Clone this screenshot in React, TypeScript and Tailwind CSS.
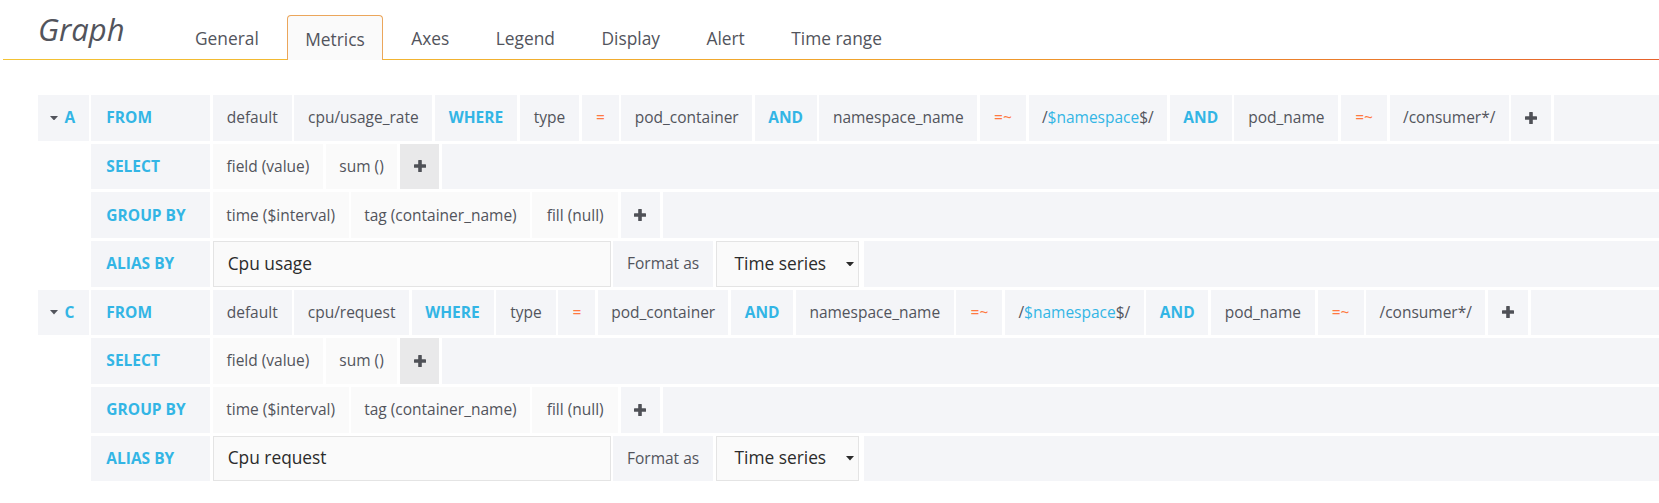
import React from "react";

type Item =
  | { k: "v"; t: string; w: string }
  | { k: "part"; t: string; w: string }
  | { k: "kw"; t: string; w: string }
  | { k: "op"; t: string; w: string }
  | { k: "var"; pre: string; v: string; post: string; w: string }
  | { k: "plus"; dark?: boolean; w: string };

function Plus() {
  return (
    <svg width="12" height="12" viewBox="0 0 12 12" className="block">
      <rect x="0" y="4.2" width="12" height="3.6" rx="0.6" fill="#4f5157" />
      <rect x="4.2" y="0" width="3.6" height="12" rx="0.6" fill="#4f5157" />
    </svg>
  );
}

function Caret({ color }: { color: string }) {
  return (
    <svg width="8" height="4.5" viewBox="0 0 8 4.5" className="block">
      <polygon points="0,0 8,0 4,4.5" fill={color} />
    </svg>
  );
}

function Cell({ item }: { item: Item }) {
  const base = "flex items-center justify-center shrink-0 whitespace-nowrap " + item.w;
  if (item.k === "plus") {
    return (
      <div className={base + (item.dark ? " bg-[#e9e9ea]" : " bg-[#f4f5f8]")}>
        <Plus />
      </div>
    );
  }
  if (item.k === "kw") {
    return <div className={base + " bg-[#f4f5f8] font-bold text-[#33b5e5]"}>{item.t}</div>;
  }
  if (item.k === "op") {
    return <div className={base + " bg-[#f4f5f8] text-[#ff7941]"}>{item.t}</div>;
  }
  if (item.k === "var") {
    return (
      <div className={base + " bg-[#f4f5f8] text-[#52545c]"}>
        {item.pre}
        <span className="text-[#33b5e5]">{item.v}</span>
        {item.post}
      </div>
    );
  }
  if (item.k === "part") {
    return <div className={base + " bg-[#fafafa] text-[#52545c]"}>{item.t}</div>;
  }
  return <div className={base + " bg-[#f4f5f8] text-[#52545c]"}>{item.t}</div>;
}

function Label({ text }: { text: string }) {
  return (
    <div className="flex items-center w-[118.7px] shrink-0 pl-[15px] bg-[#f4f5f8] font-bold text-[#33b5e5]">
      {text}
    </div>
  );
}

function Row({ label, items }: { label: string; items: Item[] }) {
  return (
    <div className="flex gap-[2.67px] h-[45.67px]">
      <Label text={label} />
      {items.map((it, i) => (
        <Cell key={i} item={it} />
      ))}
      <div className="flex-1 bg-[#f4f5f8]" />
    </div>
  );
}

function AliasRow({ alias }: { alias: string }) {
  return (
    <div className="flex gap-[2.67px] h-[45.67px]">
      <Label text="ALIAS BY" />
      <div className="flex items-center w-[398px] shrink-0 pl-[14px] bg-[#fafafa] border border-[#e4e4e4] text-[17.33px] text-[#2b2b2b]">
        {alias}
      </div>
      <div className="flex items-center justify-center w-[99.5px] shrink-0 bg-[#f4f5f8] text-[#52545c]">
        Format as
      </div>
      <div className="flex items-center justify-between w-[143.5px] shrink-0 mr-[2.67px] pl-[18px] pr-[4px] bg-[#fafafa] border border-[#e4e4e4] text-[17.33px] text-[#2b2b2b]">
        <span>Time series</span>
        <Caret color="#2b2b2b" />
      </div>
      <div className="flex-1 bg-[#f4f5f8]" />
    </div>
  );
}

function Query({
  letter,
  metric,
  metricW,
  alias,
}: {
  letter: string;
  metric: string;
  metricW: string;
  alias: string;
}) {
  const from: Item[] = [
    { k: "v", t: "default", w: "w-[79px]" },
    { k: "v", t: metric, w: metricW },
    { k: "kw", t: "WHERE", w: "w-[82px]" },
    { k: "v", t: "type", w: "w-[59.5px]" },
    { k: "op", t: "=", w: "w-[37px]" },
    { k: "v", t: "pod_container", w: "w-[130.5px]" },
    { k: "kw", t: "AND", w: "w-[62px]" },
    { k: "v", t: "namespace_name", w: "w-[158px]" },
    { k: "op", t: "=~", w: "w-[46px]" },
    { k: "var", pre: "/", v: "$namespace", post: "$/", w: "w-[138.5px]" },
    { k: "kw", t: "AND", w: "w-[62px]" },
    { k: "v", t: "pod_name", w: "w-[104px]" },
    { k: "op", t: "=~", w: "w-[46px]" },
    { k: "v", t: "/consumer*/", w: "w-[119px]" },
    { k: "plus", w: "w-[40px]" },
  ];
  const select: Item[] = [
    { k: "part", t: "field (value)", w: "w-[110.5px]" },
    { k: "part", t: "sum ()", w: "w-[71.4px]" },
    { k: "plus", dark: true, w: "w-[39.4px]" },
  ];
  const group: Item[] = [
    { k: "part", t: "time ($interval)", w: "w-[136px]" },
    { k: "part", t: "tag (container_name)", w: "w-[178.2px]" },
    { k: "part", t: "fill (null)", w: "w-[86px]" },
    { k: "plus", w: "w-[39.2px]" },
  ];
  return (
    <div className="flex items-start gap-[2.67px]">
      <div className="flex items-center gap-[6.5px] w-[50.7px] h-[45.67px] shrink-0 pl-[12px] bg-[#f4f5f8]">
        <Caret color="#52545c" />
        <span className="font-bold text-[#33b5e5]">{letter}</span>
      </div>
      <div className="flex flex-col gap-[3px] flex-1">
        <Row label="FROM" items={from} />
        <Row label="SELECT" items={select} />
        <Row label="GROUP BY" items={group} />
        <AliasRow alias={alias} />
      </div>
    </div>
  );
}

const tabs = ["General", "Metrics", "Axes", "Legend", "Display", "Alert", "Time range"];

export default function App() {
  return (
    <div
      className="w-[1659px] h-[503px] overflow-hidden bg-white text-[15.5px]"
      style={{ fontFamily: '"Open Sans", "Liberation Sans", sans-serif' }}
    >
      <div className="relative h-[60px] flex items-start">
        <div className="absolute left-[3px] right-0 bottom-0 h-[1px] bg-[linear-gradient(to_right,#f3c334,#f0a12c_55%,#e6612c)]" />
        <div className="w-[176.5px] shrink-0 pl-[38px] pt-[8px] text-[31px] italic leading-[42px] text-[#52545c]">
          Graph
        </div>
        <div className="flex gap-[9.5px] pt-[15px]">
          {tabs.map((t) =>
            t === "Metrics" ? (
              <div
                key={t}
                className="relative z-10 h-[45px] px-[17.5px] pt-[11.3px] leading-[24px] text-[17.33px] text-[#52545c] bg-[#fafafa] border border-b-0 border-[#eba65b] rounded-t-[4px]"
              >
                {t}
              </div>
            ) : (
              <div
                key={t}
                className="h-[45px] px-[18.5px] pt-[10.6px] leading-[24px] text-[17.33px] text-[#52545c]"
              >
                {t}
              </div>
            )
          )}
        </div>
      </div>
      <div className="flex flex-col gap-[3px] pt-[35px] pl-[38px]">
        <Query letter="A" metric="cpu/usage_rate" metricW="w-[138px]" alias="Cpu usage" />
        <Query letter="C" metric="cpu/request" metricW="w-[114.5px]" alias="Cpu request" />
      </div>
    </div>
  );
}
